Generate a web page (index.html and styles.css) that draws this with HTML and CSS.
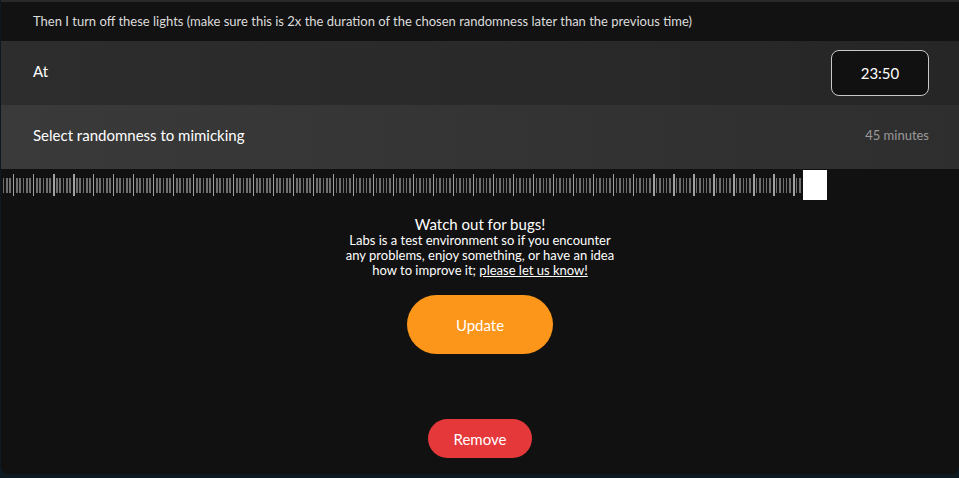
FILE: index.html
```html
<!DOCTYPE html>
<html>
<head>
<meta charset="utf-8">
<link rel="stylesheet" href="styles.css">
</head>
<body>
<div class="card">
  <div class="row row-note">Then I turn off these lights (make sure this is 2x the duration of the chosen randomness later than the previous time)</div>
  <div class="row row-at">
    <span class="label">At</span>
    <div class="time">23:50</div>
  </div>
  <div class="row row-rand">
    <span class="label">Select randomness to mimicking</span>
    <span class="value">45 minutes</span>
  </div>
  <div class="slider">
    <div class="ticks"></div>
    <div class="thumb"></div>
  </div>
  <div class="notice">
    <div class="notice-title">Watch out for bugs!</div>
    <div class="notice-line">Labs is a test environment so if you encounter</div>
    <div class="notice-line">any problems, enjoy something, or have an idea</div>
    <div class="notice-line">how to improve it; <a href="#">please let us know!</a></div>
  </div>
  <div class="actions">
    <button class="btn btn-update">Update</button>
    <button class="btn btn-remove">Remove</button>
  </div>
</div>
</body>
</html>
```
FILE: styles.css
```css
html, body {
  margin: 0;
  padding: 0;
  background: #0e1a21;
  height: 478px;
  overflow: hidden;
}
body {
  font-family: "Lato", "Open Sans", sans-serif;
  color: #fff;
}
.card {
  margin-left: 1px;
  height: 474px;
  background: #111111;
  border-radius: 0 0 8px 8px;
  overflow: hidden;
  display: flex;
  flex-direction: column;
}
.row {
  display: flex;
  align-items: center;
  padding: 0 30px 0 32px;
  flex-shrink: 0;
}
.row-note {
  border-top: 2px solid #2a2a2a;
  font-size: 13px;
  color: #dcdcdc;
  background: #121212;
  padding-bottom: 2px;
  box-sizing: border-box;
  height: 41px;
  white-space: nowrap;
}
.row-at {
  height: 64px;
  justify-content: space-between;
  background: linear-gradient(90deg, #2d2d2d, #262626);
}
.row-rand {
  height: 64px;
  justify-content: space-between;
  background: linear-gradient(90deg, #3a3a3a, #2e2e2e);
}
.row-at .label,
.row-rand .label,
.row-rand .value {
  padding-bottom: 4px;
}
.label {
  font-size: 15px;
  color: #fff;
}
.time {
  width: 96px;
  height: 44px;
  border: 1px solid #c8c8c8;
  border-radius: 8px;
  background: #111;
  display: flex;
  align-items: center;
  justify-content: center;
  font-size: 15px;
}
.value {
  font-size: 13px;
  color: #9a9a9a;
}
.slider {
  height: 32px;
  display: flex;
  align-items: stretch;
  flex-shrink: 0;
}
.ticks {
  width: 802px;
  background:
    linear-gradient(#111, #111) 0 0 / 100% 5px no-repeat,
    linear-gradient(#111, #111) 0 27px / 100% 5px no-repeat,
    repeating-linear-gradient(90deg, transparent 0 12px, #a0a0a0 12px 13.5px, transparent 13.5px 20px) 0 0 / 100% 100%,
    linear-gradient(#111, #111) 0 0 / 100% 9px no-repeat,
    linear-gradient(#111, #111) 0 24px / 100% 8px no-repeat,
    repeating-linear-gradient(90deg, transparent 0 1.7px, #6e6e6e 1.7px 3.2px, transparent 3.2px 3.333px) 0 0 / 100% 100%;
  background-color: #111;
}
.thumb {
  width: 24px;
  background: #fff;
  margin-top: 1px;
  margin-bottom: 1px;
}
.notice {
  margin-top: 14px;
  text-align: center;
  white-space: nowrap;
}
.notice-title {
  font-size: 15px;
  line-height: 18px;
}
.notice-line {
  font-size: 13px;
  line-height: 15px;
}
.notice-line a {
  color: #fff;
}
.actions {
  display: flex;
  flex-direction: column;
  align-items: center;
}
.btn {
  border: none;
  color: #fff;
  font-family: inherit;
  font-size: 15px;
  border-radius: 999px;
  cursor: pointer;
}
.btn-update {
  margin-top: 17px;
  width: 146px;
  height: 59px;
  background: #fc961a;
}
.btn-remove {
  margin-top: 65px;
  width: 104px;
  height: 39px;
  background: #e5383b;
}
```
